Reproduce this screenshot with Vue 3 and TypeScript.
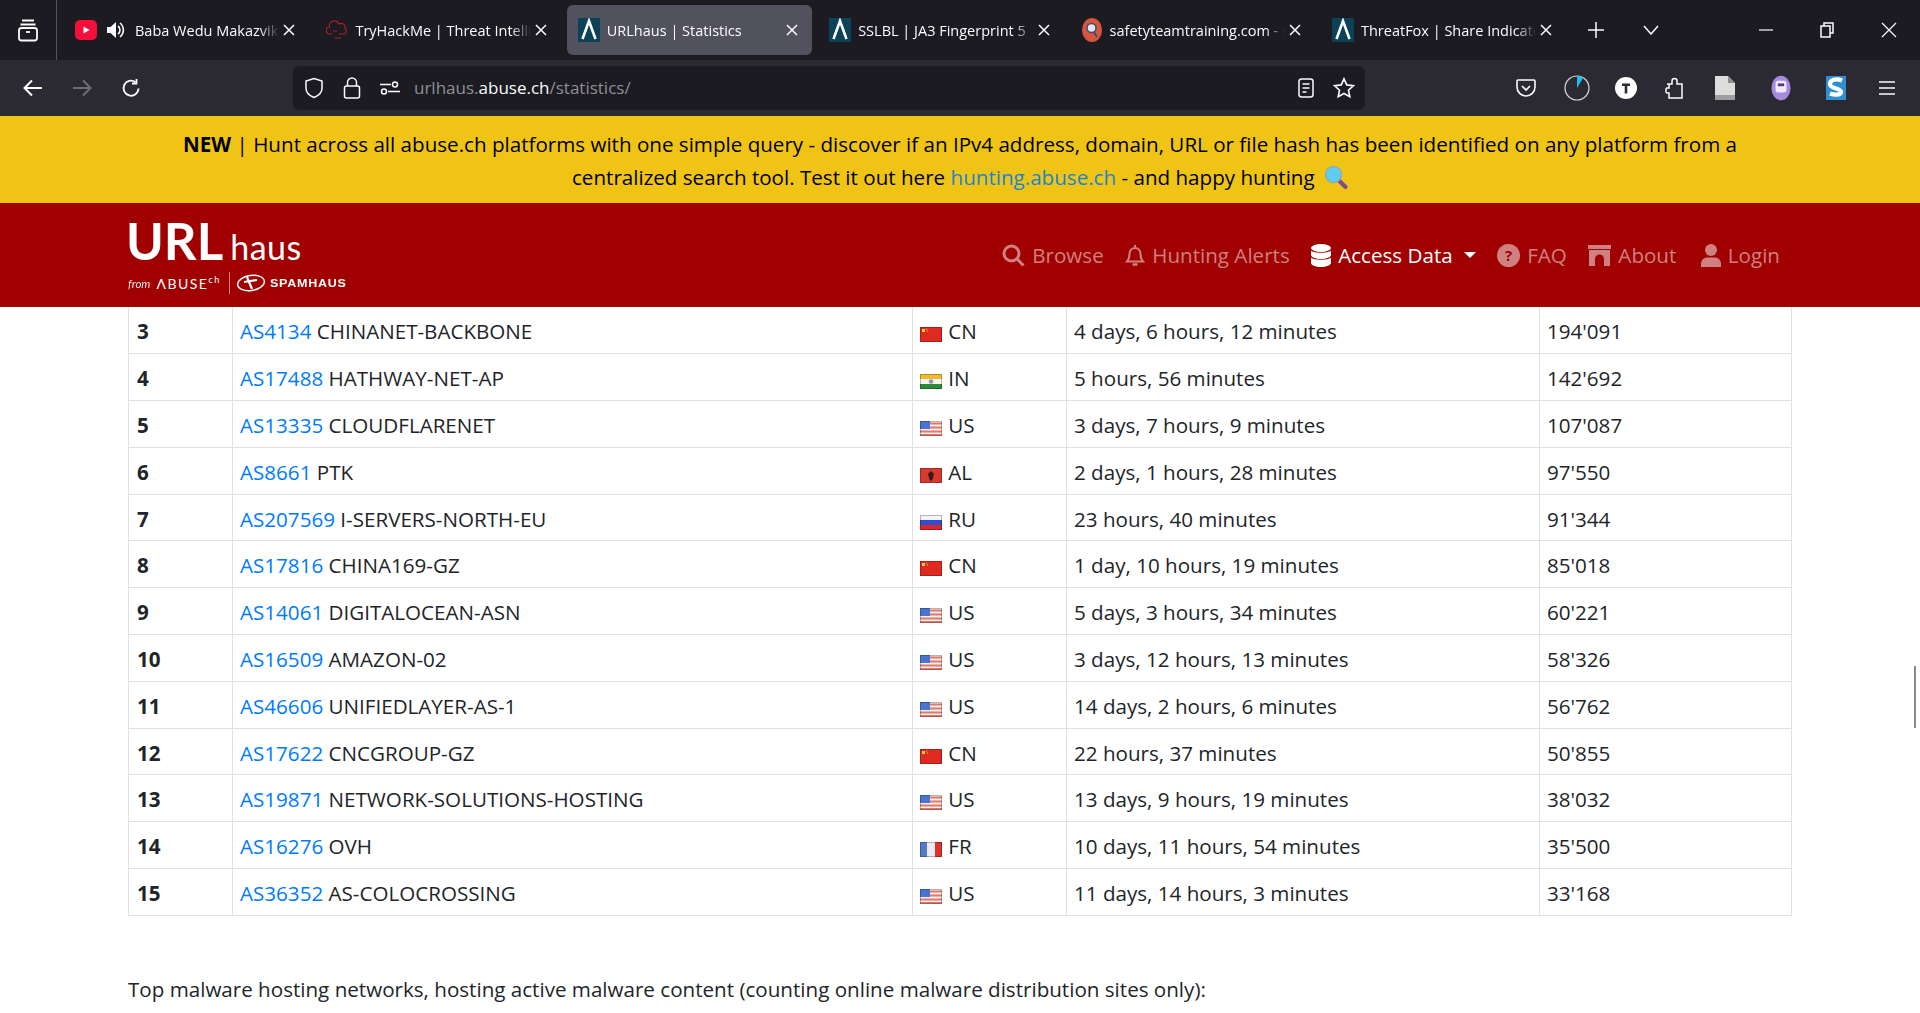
<template>
  <div class="window">
    <div class="tabbar">
      <div class="tabs-menu">
        <svg width="22" height="24" viewBox="0 0 22 24" fill="none" stroke="#fbfbfe" stroke-width="1.8">
          <path d="M5 2.5h12M3.5 6.5h15" />
          <rect x="2" y="10" width="18" height="12.5" rx="2.5" />
          <path d="M9 14h4" />
        </svg>
      </div>
      <div class="tabs">
        <div v-for="tab in tabs" :key="tab.title" class="tab" :class="{ active: tab.active }">
          <svg v-if="tab.icon === 'yt'" class="fav" viewBox="0 0 22 22">
            <rect x="0" y="1" width="22" height="20" rx="5" fill="#f5103c" />
            <path d="M8.5 7.5l6 3.5-6 3.5z" fill="#fff" />
          </svg>
          <svg v-else-if="tab.icon === 'thm'" class="fav" viewBox="0 0 22 22" fill="none" stroke="#a3222a" stroke-width="1.2">
            <path d="M6 15H4a3.500 3.500 0 0 1-.5-7A5 5 0 0 1 13 5a4 4 0 0 1 6 4.500 3 3 0 0 1-1 5.500h-5" />
            <path d="M9 19h6M7 12h4" />
          </svg>
          <svg v-else-if="tab.icon === 'abuse'" class="fav" viewBox="0 0 22 24">
            <rect width="22" height="24" fill="#0c4257" />
            <path d="M4.500 21L11 3l6.500 18" fill="none" stroke="#fff" stroke-width="2.600" />
          </svg>
          <svg v-else class="fav" viewBox="0 0 22 24">
            <ellipse cx="11" cy="12" rx="10" ry="12" fill="#d9553d" />
            <circle cx="10.500" cy="10" r="4.500" fill="#dfe8f2" stroke="#35506e" stroke-width="1.500" />
            <path d="M13 14l3 5" stroke="#35506e" stroke-width="2" />
          </svg>
          <svg v-if="tab.sound" class="speaker" viewBox="0 0 18 20" fill="#fbfbfe">
            <path d="M0 7h3.500L9 2v16l-5.500-5H0z" />
            <path d="M11 6a5 5 0 0 1 0 8M13 3a9 9 0 0 1 0 14" fill="none" stroke="#fbfbfe" stroke-width="1.600" />
          </svg>
          <span class="tab-title">{{ tab.title }}</span>
          <svg class="tab-close" width="12" height="12" viewBox="0 0 12 12" stroke="#fbfbfe" stroke-width="1.500">
            <path d="M1 1l10 10M11 1L1 11" />
          </svg>
        </div>
      </div>
      <svg class="newtab" width="18" height="18" viewBox="0 0 18 18" stroke="#fbfbfe" stroke-width="1.500">
        <path d="M9 1v16M1 9h16" />
      </svg>
      <svg class="alltabs" width="16" height="10" viewBox="0 0 16 10" fill="none" stroke="#fbfbfe" stroke-width="1.500">
        <path d="M1 1l7 8 7-8" />
      </svg>
      <div class="winctl">
        <svg width="14" height="14" viewBox="0 0 14 14" stroke="#fbfbfe" stroke-width="1.200"><path d="M0 7h14" /></svg>
        <svg width="14" height="16" viewBox="0 0 14 16" fill="none" stroke="#fbfbfe" stroke-width="1.500">
          <rect x="1" y="4" width="9" height="11" />
          <path d="M4 4V1h9v10h-3" />
        </svg>
        <svg width="16" height="16" viewBox="0 0 16 16" stroke="#fbfbfe" stroke-width="1.200"><path d="M1 1l14 14M15 1L1 15" /></svg>
      </div>
    </div>

    <div class="navrow">
      <div class="nav-arrows">
        <svg width="20" height="18" viewBox="0 0 20 18" fill="none" stroke="#fbfbfe" stroke-width="2"><path d="M19 9H2M9 1.500L1.500 9 9 16.500" /></svg>
        <svg width="20" height="18" viewBox="0 0 20 18" fill="none" stroke="#6e6d75" stroke-width="2"><path d="M1 9h17M11 1.500L18.500 9 11 16.500" /></svg>
        <svg width="20" height="20" viewBox="0 0 20 20" fill="none" stroke="#fbfbfe" stroke-width="1.800">
          <path d="M17.500 10.500a7.500 7.500 0 1 1-3-6.300" />
          <path d="M15.500 1v4.500H11" />
        </svg>
      </div>
      <div class="urlbar">
        <svg width="20" height="22" viewBox="0 0 20 22" fill="none" stroke="#fbfbfe" stroke-width="1.500">
          <path d="M10 1.500l8 2.500v7c0 4.500-3.500 7.800-8 9.500-4.500-1.700-8-5-8-9.500V4z" />
        </svg>
        <svg class="lock" width="18" height="22" viewBox="0 0 18 22" fill="none" stroke="#fbfbfe" stroke-width="1.500">
          <rect x="1.500" y="9" width="15" height="12" rx="2" />
          <path d="M4.500 9V5.500a4.500 4.500 0 0 1 9 0V9" />
        </svg>
        <svg class="perm" width="20" height="14" viewBox="0 0 20 14" fill="none" stroke="#fbfbfe" stroke-width="1.500">
          <path d="M0 3.500h11M8 10.500h12" />
          <circle cx="15" cy="3.500" r="2.500" />
          <circle cx="4" cy="10.500" r="2.500" />
        </svg>
        <span class="url"><span class="dim">urlhaus.</span>abuse.ch<span class="dim">/statistics/</span></span>
        <svg class="reader" width="16" height="20" viewBox="0 0 16 20" fill="none" stroke="#fbfbfe" stroke-width="1.500">
          <rect x="1" y="1" width="14" height="18" rx="2.500" />
          <path d="M4.500 6h7M4.500 10h7M4.500 14h4" />
        </svg>
        <svg class="star" width="22" height="22" viewBox="0 0 22 22" fill="none" stroke="#fbfbfe" stroke-width="1.600">
          <path d="M11 1.800l2.800 6.100 6.600.8-4.900 4.500 1.300 6.600L11 16.500l-5.800 3.300 1.300-6.600-4.900-4.500 6.600-.8z" />
        </svg>
      </div>
      <div class="tools">
        <svg width="20" height="20" viewBox="0 0 20 20" fill="none" stroke="#fbfbfe" stroke-width="1.600">
          <path d="M2 2h16a1 1 0 0 1 1 1v6a9 9 0 0 1-18 0V3a1 1 0 0 1 1-1z" />
          <path d="M6 8l4 4 4-4" />
        </svg>
        <svg width="26" height="26" viewBox="0 0 26 26">
          <circle cx="13" cy="13" r="12" fill="none" stroke="#d8d8dc" stroke-width="1.200" />
          <path d="M13 1a12 12 0 0 1 6 2l-6 10z" fill="#1cc0ee" />
        </svg>
        <svg width="22" height="22" viewBox="0 0 22 22">
          <circle cx="11" cy="11" r="11" fill="#fff" />
          <path d="M7 6.500h8V9h-2.700v7.500H9.700V9H7z" fill="#2b2a33" />
        </svg>
        <svg width="20" height="22" viewBox="0 0 20 22" fill="none" stroke="#fbfbfe" stroke-width="1.500">
          <path d="M2 7h5V4a2.500 2.500 0 0 1 5 0v3h5v14H4v-5H2a2 2 0 0 1-1-1v-3a2 2 0 0 1 1-1h2V7z" />
        </svg>
        <svg width="20" height="24" viewBox="0 0 20 24">
          <path d="M0 0h13l7 7v17H0z" fill="#dcdcdc" />
          <path d="M0 19h20v5H0z" fill="#9e9e9e" />
          <path d="M13 0v7h7z" fill="#8f8f8f" />
        </svg>
        <svg width="20" height="28" viewBox="0 0 22 28">
          <ellipse cx="11" cy="14" rx="10.500" ry="13.500" fill="#a58be0" />
          <rect x="5" y="6" width="12" height="13" rx="3" fill="#efe9fb" />
          <rect x="7.500" y="9" width="7" height="3" fill="#4d3b80" />
        </svg>
        <svg width="20" height="24" viewBox="0 0 20 24">
          <rect width="20" height="24" fill="#2f8fd0" />
          <path d="M16 4.500C10 2 4 4 4 8c0 5 11 4 11 8 0 3-6 3.500-11 1.500" fill="none" stroke="#fff" stroke-width="4.200" />
        </svg>
        <svg width="18" height="14" viewBox="0 0 18 14" stroke="#fbfbfe" stroke-width="1.600"><path d="M1 1h16M1 7h16M1 13h16" /></svg>
      </div>
    </div>

    <div class="banner">
      <b>NEW</b> | Hunt across all abuse.ch platforms with one simple query - discover if an IPv4 address, domain, URL or file hash has been identified on any platform from a<br />
      centralized search tool. Test it out here <a class="banner-link">hunting.abuse.ch</a> - and happy hunting
      <svg class="lens" width="24" height="24" viewBox="0 0 24 24">
        <path d="M14.500 15l7 7" stroke="#7b4b94" stroke-width="4" stroke-linecap="round" />
        <circle cx="9.500" cy="9.500" r="8" fill="#5fcdf0" stroke="#8fa9bd" stroke-width="1.500" />
      </svg>
    </div>

    <header class="navbar">
      <div class="brand">
        <div class="brand-name"><span class="brand-url">URL</span><span class="brand-haus">haus</span></div>
        <div class="brand-sub">
          <span class="from">from</span>
          <span class="abuse">ΛBUSE<sup>ch</sup></span>
          <span class="brand-sep"></span>
          <svg width="30" height="20" viewBox="0 0 30 20" fill="none" stroke="#fff">
            <ellipse cx="15" cy="10" rx="13.500" ry="7.500" stroke-width="1.500" transform="rotate(-8 15 10)" />
            <path d="M11 4l5 12M8 9l13-2" stroke-width="2.200" />
          </svg>
          <span class="spamhaus">SPAMHAUS</span>
        </div>
      </div>
      <nav class="menu">
        <a class="menu-item">
          <svg width="23" height="23" viewBox="0 0 23 23" fill="none" stroke="currentColor" stroke-width="3">
            <circle cx="9.500" cy="9.500" r="7.500" /><path d="M15 15l6.500 6.500" />
          </svg>Browse
        </a>
        <a class="menu-item">
          <svg width="20" height="23" viewBox="0 0 20 23" fill="none" stroke="currentColor" stroke-width="2">
            <path d="M2 17.500c2-2 2.500-3.500 2.500-8a5.500 5.500 0 0 1 11 0c0 4.500.5 6 2.500 8z" />
            <path d="M7.500 20.500h5" stroke-width="2.500" /><path d="M10 1v2" />
          </svg>Hunting Alerts
        </a>
        <a class="menu-item current">
          <svg width="20" height="23" viewBox="0 0 20 23" fill="currentColor">
            <ellipse cx="10" cy="4" rx="10" ry="4" />
            <path d="M0 6.500C2 9.500 18 9.500 20 6.500V11c0 2.200-4.500 4-10 4S0 13.200 0 11z" />
            <path d="M0 13.500c2 3 18 3 20 0V19c0 2.200-4.500 4-10 4S0 21.200 0 19z" />
          </svg>Access Data
          <i class="caret"></i>
        </a>
        <a class="menu-item">
          <svg width="23" height="23" viewBox="0 0 23 23">
            <circle cx="11.500" cy="11.500" r="11.500" fill="currentColor" />
            <text x="11.500" y="17" text-anchor="middle" font-size="15" font-weight="700" font-family="Open Sans, sans-serif" fill="#a00000">?</text>
          </svg>FAQ
        </a>
        <a class="menu-item">
          <svg width="23" height="21" viewBox="0 0 23 21" fill="currentColor">
            <path d="M0 0h23v4H0z" />
            <path d="M1 5h21v16h-6v-7a4.500 4.500 0 0 0-9 0v7H1z" />
          </svg>About
        </a>
        <a class="menu-item">
          <svg width="20" height="23" viewBox="0 0 20 23" fill="currentColor">
            <circle cx="10" cy="6" r="6" />
            <path d="M0 23v-3c0-4 3-6.500 6-6.500h8c3 0 6 2.500 6 6.500v3z" />
          </svg>Login
        </a>
      </nav>
    </header>

    <main class="content">
      <table class="stats">
        <colgroup>
          <col class="c-rank" /><col class="c-net" /><col class="c-cc" /><col class="c-time" /><col />
        </colgroup>
        <tbody>
          <tr v-for="row in rows" :key="row.rank">
            <th>{{ row.rank }}</th>
            <td><a class="as-link">{{ row.asn }}</a> {{ row.name }}</td>
            <td class="cc">
              <svg class="flag" viewBox="0 0 22 15">
                <template v-if="row.cc === 'CN'">
                  <rect width="22" height="15" fill="#de2a20" />
                  <path d="M2 2h3v3H2zM6 1.500h1v1H6zM7 3.500h1v1H7z" fill="#f6d33c" />
                </template>
                <template v-else-if="row.cc === 'IN'">
                  <rect width="22" height="5" fill="#f5b92e" />
                  <rect y="5" width="22" height="5" fill="#f4f4f0" />
                  <rect y="10" width="22" height="5" fill="#2c8a38" />
                  <circle cx="11" cy="7.500" r="2.200" fill="#8a93b5" />
                </template>
                <template v-else-if="row.cc === 'US'">
                  <rect width="22" height="15" fill="#f5f0ee" />
                  <path d="M0 1.500h22v2H0zM0 5.500h22v2H0zM0 9.500h22v2H0zM0 13h22v2H0z" fill="#e0796c" />
                  <rect width="10" height="8" fill="#4a74d0" />
                </template>
                <template v-else-if="row.cc === 'AL'">
                  <rect width="22" height="15" fill="#d8392e" />
                  <path d="M11 3l3 3-1.500 5.500-1.500 1.500-1.500-1.500L8 6z" fill="#3a1a1a" />
                </template>
                <template v-else-if="row.cc === 'RU'">
                  <rect width="22" height="5" fill="#f4f4f8" />
                  <rect y="5" width="22" height="5" fill="#2f4fd0" />
                  <rect y="10" width="22" height="5" fill="#d8262c" />
                </template>
                <template v-else>
                  <rect width="8" height="15" fill="#5578c8" />
                  <rect x="7" width="8" height="15" fill="#ecebef" />
                  <rect x="15" width="7" height="15" fill="#e0302c" />
                </template>
                <rect x=".5" y=".5" width="21" height="14" fill="none" stroke="#000" stroke-opacity=".25" />
              </svg>
              {{ row.cc }}
            </td>
            <td>{{ row.time }}</td>
            <td>{{ row.count }}</td>
          </tr>
        </tbody>
      </table>
      <p class="after">Top malware hosting networks, hosting active malware content (counting online malware distribution sites only):</p>
      <div class="scrollthumb"></div>
    </main>
  </div>
</template>

<script setup lang="ts">
interface Tab {
  title: string;
  icon: string;
  active?: boolean;
  sound?: boolean;
}

const tabs: Tab[] = [
  { title: "Baba Wedu Makazvikanganisa", icon: "yt", sound: true },
  { title: "TryHackMe | Threat Intelligence", icon: "thm" },
  { title: "URLhaus | Statistics", icon: "abuse", active: true },
  { title: "SSLBL | JA3 Fingerprint 5", icon: "abuse" },
  { title: "safetyteamtraining.com - safety", icon: "safety" },
  { title: "ThreatFox | Share Indicators", icon: "abuse" },
];

const rows = [
  { rank: 3, asn: "AS4134", name: "CHINANET-BACKBONE", cc: "CN", time: "4 days, 6 hours, 12 minutes", count: "194'091" },
  { rank: 4, asn: "AS17488", name: "HATHWAY-NET-AP", cc: "IN", time: "5 hours, 56 minutes", count: "142'692" },
  { rank: 5, asn: "AS13335", name: "CLOUDFLARENET", cc: "US", time: "3 days, 7 hours, 9 minutes", count: "107'087" },
  { rank: 6, asn: "AS8661", name: "PTK", cc: "AL", time: "2 days, 1 hours, 28 minutes", count: "97'550" },
  { rank: 7, asn: "AS207569", name: "I-SERVERS-NORTH-EU", cc: "RU", time: "23 hours, 40 minutes", count: "91'344" },
  { rank: 8, asn: "AS17816", name: "CHINA169-GZ", cc: "CN", time: "1 day, 10 hours, 19 minutes", count: "85'018" },
  { rank: 9, asn: "AS14061", name: "DIGITALOCEAN-ASN", cc: "US", time: "5 days, 3 hours, 34 minutes", count: "60'221" },
  { rank: 10, asn: "AS16509", name: "AMAZON-02", cc: "US", time: "3 days, 12 hours, 13 minutes", count: "58'326" },
  { rank: 11, asn: "AS46606", name: "UNIFIEDLAYER-AS-1", cc: "US", time: "14 days, 2 hours, 6 minutes", count: "56'762" },
  { rank: 12, asn: "AS17622", name: "CNCGROUP-GZ", cc: "CN", time: "22 hours, 37 minutes", count: "50'855" },
  { rank: 13, asn: "AS19871", name: "NETWORK-SOLUTIONS-HOSTING", cc: "US", time: "13 days, 9 hours, 19 minutes", count: "38'032" },
  { rank: 14, asn: "AS16276", name: "OVH", cc: "FR", time: "10 days, 11 hours, 54 minutes", count: "35'500" },
  { rank: 15, asn: "AS36352", name: "AS-COLOCROSSING", cc: "US", time: "11 days, 14 hours, 3 minutes", count: "33'168" },
];
</script>

<style>
html,
body {
  margin: 0;
  overflow: hidden;
}
</style>

<style scoped>
.window {
  height: 1013px;
  display: flex;
  flex-direction: column;
  overflow: hidden;
  background: #fff;
  color: #212529;
  font-family: "Open Sans", sans-serif;
  font-size: 20.6px;
}

/* browser chrome */
.tabbar {
  height: 60px;
  flex: none;
  display: flex;
  align-items: center;
  background: #1c1b22;
  color: #fbfbfe;
  position: relative;
}

.tabs-menu {
  width: 57px;
  height: 60px;
  box-sizing: border-box;
  display: flex;
  align-items: center;
  justify-content: center;
  border-right: 1px solid #55545c;
}

.tabs {
  display: flex;
  gap: 6px;
  margin-left: 7px;
}

.tab {
  width: 245.4px;
  height: 50px;
  box-sizing: border-box;
  padding: 0 14px 0 11px;
  display: flex;
  align-items: center;
  border-radius: 6px;
}

.tab.active {
  background: #52525e;
}

.fav {
  width: 22px;
  height: 24px;
  flex: none;
}

.speaker {
  width: 18px;
  height: 20px;
  flex: none;
  margin-left: 10px;
  margin-right: 3px;
}

.tab-title {
  flex: 1;
  min-width: 0;
  margin-left: 7px;
  font-size: 14.5px;
  white-space: nowrap;
  overflow: hidden;
  -webkit-mask-image: linear-gradient(to right, #000 calc(100% - 24px), transparent calc(100% - 4px));
  mask-image: linear-gradient(to right, #000 calc(100% - 24px), transparent calc(100% - 4px));
}

.tab-close {
  flex: none;
}

.newtab {
  margin-left: 21px;
}

.alltabs {
  margin-left: 38px;
}

.winctl {
  margin-left: auto;
  margin-right: 23px;
  display: flex;
  align-items: center;
  gap: 47px;
}

.navrow {
  height: 56px;
  flex: none;
  display: flex;
  align-items: center;
  background: #2b2a33;
}

.nav-arrows {
  display: flex;
  align-items: center;
  gap: 29px;
  width: 293px;
  box-sizing: border-box;
  padding-left: 23px;
}

.urlbar {
  width: 1072px;
  height: 44px;
  box-sizing: border-box;
  display: flex;
  align-items: center;
  padding: 0 10px 0 11px;
  background: #1c1b22;
  border-radius: 6px;
}

.lock {
  margin-left: 19px;
}

.perm {
  margin-left: 19px;
}

.url {
  margin-left: 14px;
  margin-top: -2px;
  font-size: 17px;
  color: #fbfbfe;
}

.dim {
  color: #8f8f94;
}

.reader {
  margin-left: auto;
}

.star {
  margin-left: 19px;
}

.tools {
  display: grid;
  grid-template-columns: 50px 52px 46px 52px 48px 64px 46px 56px;
  align-items: center;
  justify-items: center;
  padding-left: 136px;
}

/* page */
.banner {
  flex: none;
  padding: 11.5px 0 9.5px;
  background: #f0c415;
  color: #000;
  text-align: center;
  line-height: 33px;
}

.banner-link {
  color: #1a84cf;
}

.lens {
  vertical-align: -4px;
  margin-left: 4px;
}

.navbar {
  height: 104px;
  flex: none;
  box-sizing: border-box;
  display: flex;
  justify-content: space-between;
  padding: 0 140px 0 126px;
  background: #a00000;
  color: #fff;
}

.brand {
  padding-top: 13px;
}

.brand-name {
  display: flex;
  align-items: baseline;
  line-height: 50px;
}

.brand-url {
  font-family: Lato, sans-serif;
  font-size: 51px;
  font-weight: 700;
}

.brand-haus {
  margin-left: 7px;
  font-family: Lato, sans-serif;
  font-size: 34px;
  font-weight: 400;
  letter-spacing: 0.5px;
}

.brand-sub {
  display: flex;
  align-items: center;
  height: 24px;
  margin-top: -1px;
  margin-left: 2px;
}

.from {
  font-family: Lato, sans-serif;
  font-size: 11.5px;
  font-style: italic;
  opacity: 0.9;
}

.abuse {
  margin-left: 6px;
  font-family: Lato, sans-serif;
  font-size: 14px;
  letter-spacing: 1.5px;
}

.abuse sup {
  font-size: 9px;
  line-height: 0;
}

.brand-sep {
  width: 1px;
  height: 22px;
  margin: 0 6px 0 8px;
  background: #d98080;
}

.spamhaus {
  margin-left: 4px;
  font-family: "Liberation Sans", sans-serif;
  font-size: 10px;
  font-weight: 700;
  letter-spacing: 0.6px;
  transform: scaleX(1.25);
  transform-origin: left;
}

.menu {
  display: flex;
  align-items: center;
  gap: 21.5px;
  height: 104px;
  padding-bottom: 0;
}

.menu-item {
  display: flex;
  align-items: center;
  gap: 7px;
  color: #cf8080;
}

.menu-item:last-child {
  margin-left: 3px;
}

.menu-item.current {
  color: #fff;
}

.caret {
  width: 0;
  height: 0;
  margin-left: 4px;
  border-top: 6px solid #fff;
  border-left: 6px solid transparent;
  border-right: 6px solid transparent;
}

.content {
  flex: 1;
  min-height: 0;
  padding: 0 128px;
  position: relative;
}

.stats {
  width: 1664px;
  table-layout: fixed;
  border-collapse: collapse;
}

.c-rank {
  width: 104px;
}

.c-net {
  width: 680px;
}

.c-cc {
  width: 154px;
}

.c-time {
  width: 473px;
}

.stats tr {
  height: 46.8px;
}

.stats th,
.stats td {
  box-sizing: border-box;
  padding: 2px 7px 0;
  border: 1px solid #dee2e6;
  text-align: left;
  white-space: nowrap;
  line-height: 30px;
}

.stats tr:first-child th,
.stats tr:first-child td {
  border-top: none;
}

.stats th {
  font-weight: 700;
  padding-left: 8px;
}

.as-link {
  color: #007bff;
}

.flag {
  width: 22px;
  height: 15px;
  vertical-align: -3px;
  margin-right: 1px;
}

.after {
  margin: 58px 0 0;
  line-height: 30px;
  white-space: nowrap;
}

.scrollthumb {
  position: absolute;
  right: 4px;
  top: 359px;
  width: 2px;
  height: 62px;
  background: #8a8a8a;
}
</style>
